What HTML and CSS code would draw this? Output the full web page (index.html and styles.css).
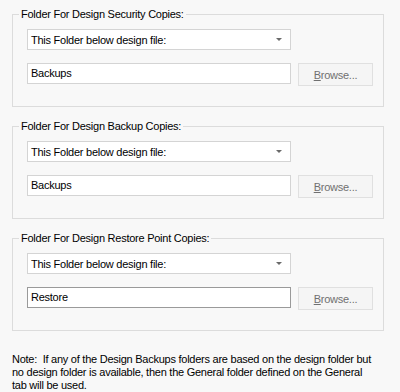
FILE: index.html
```html
<!DOCTYPE html>
<html lang="en">
<head>
    <meta charset="UTF-8">
    <title>Design Backups</title>
    <link rel="stylesheet" href="styles.css">
</head>
<body>
    <div class="panel">
        <fieldset class="group">
            <legend>Folder For Design Security Copies:</legend>
            <div class="combo">
                <span>This Folder below design file:</span>
                <i class="arrow"></i>
            </div>
            <div class="row">
                <div class="field">Backups</div>
                <button class="browse" disabled><u>B</u>rowse...</button>
            </div>
        </fieldset>

        <fieldset class="group">
            <legend>Folder For Design Backup Copies:</legend>
            <div class="combo">
                <span>This Folder below design file:</span>
                <i class="arrow"></i>
            </div>
            <div class="row">
                <div class="field">Backups</div>
                <button class="browse" disabled><u>B</u>rowse...</button>
            </div>
        </fieldset>

        <fieldset class="group">
            <legend>Folder For Design Restore Point Copies:</legend>
            <div class="combo">
                <span>This Folder below design file:</span>
                <i class="arrow"></i>
            </div>
            <div class="row">
                <div class="field active">Restore</div>
                <button class="browse" disabled><u>B</u>rowse...</button>
            </div>
        </fieldset>

        <p class="note">Note:&nbsp; If any of the Design Backups folders are based on the design folder but<br>
            no design folder is available, then the General folder defined on the General<br>
            tab will be used.</p>
    </div>
</body>
</html>
```

FILE: styles.css
```css
* {
    box-sizing: border-box;
}

body {
    margin: 0;
    background: #f8f8f8;
    font-family: 'Liberation Sans', Arial, sans-serif;
    font-size: 11px;
    letter-spacing: -0.25px;
    color: #000;
}

.panel {
    padding: 7px 16px 0 12px;
    display: flex;
    flex-direction: column;
    gap: 12px;
}

.group {
    margin: 0;
    border: 1px solid #dcdcdc;
    padding: 8px 9px 20px 14px;
    display: flex;
    flex-direction: column;
    gap: 13px;
}

.group legend {
    margin-left: -8px;
    padding: 0 2px;
    line-height: 14px;
}

.combo {
    width: 264px;
    height: 21px;
    background: #fff;
    border: 1px solid #d4d4d4;
    padding: 0 8px 0 3px;
    display: flex;
    align-items: center;
    justify-content: space-between;
}

.arrow {
    width: 0;
    height: 0;
    border-left: 3px solid transparent;
    border-right: 3px solid transparent;
    border-top: 3px solid #6a6a6a;
}

.row {
    display: flex;
    align-items: flex-start;
    gap: 7px;
}

.field {
    width: 264px;
    height: 21px;
    background: #fff;
    border: 1px solid #d4d4d4;
    padding: 0 3px;
    line-height: 19px;
}

.field.active {
    border-color: #9a9a9a;
}

.browse {
    width: 75px;
    height: 23px;
    background: #f5f5f5;
    border: 1px solid #e0e0e0;
    font-family: inherit;
    font-size: 11px;
    letter-spacing: inherit;
    color: #707070;
    padding: 0;
}

.note {
    margin: 10px 0 0 0;
    line-height: 13px;
    width: 384px;
}
```
